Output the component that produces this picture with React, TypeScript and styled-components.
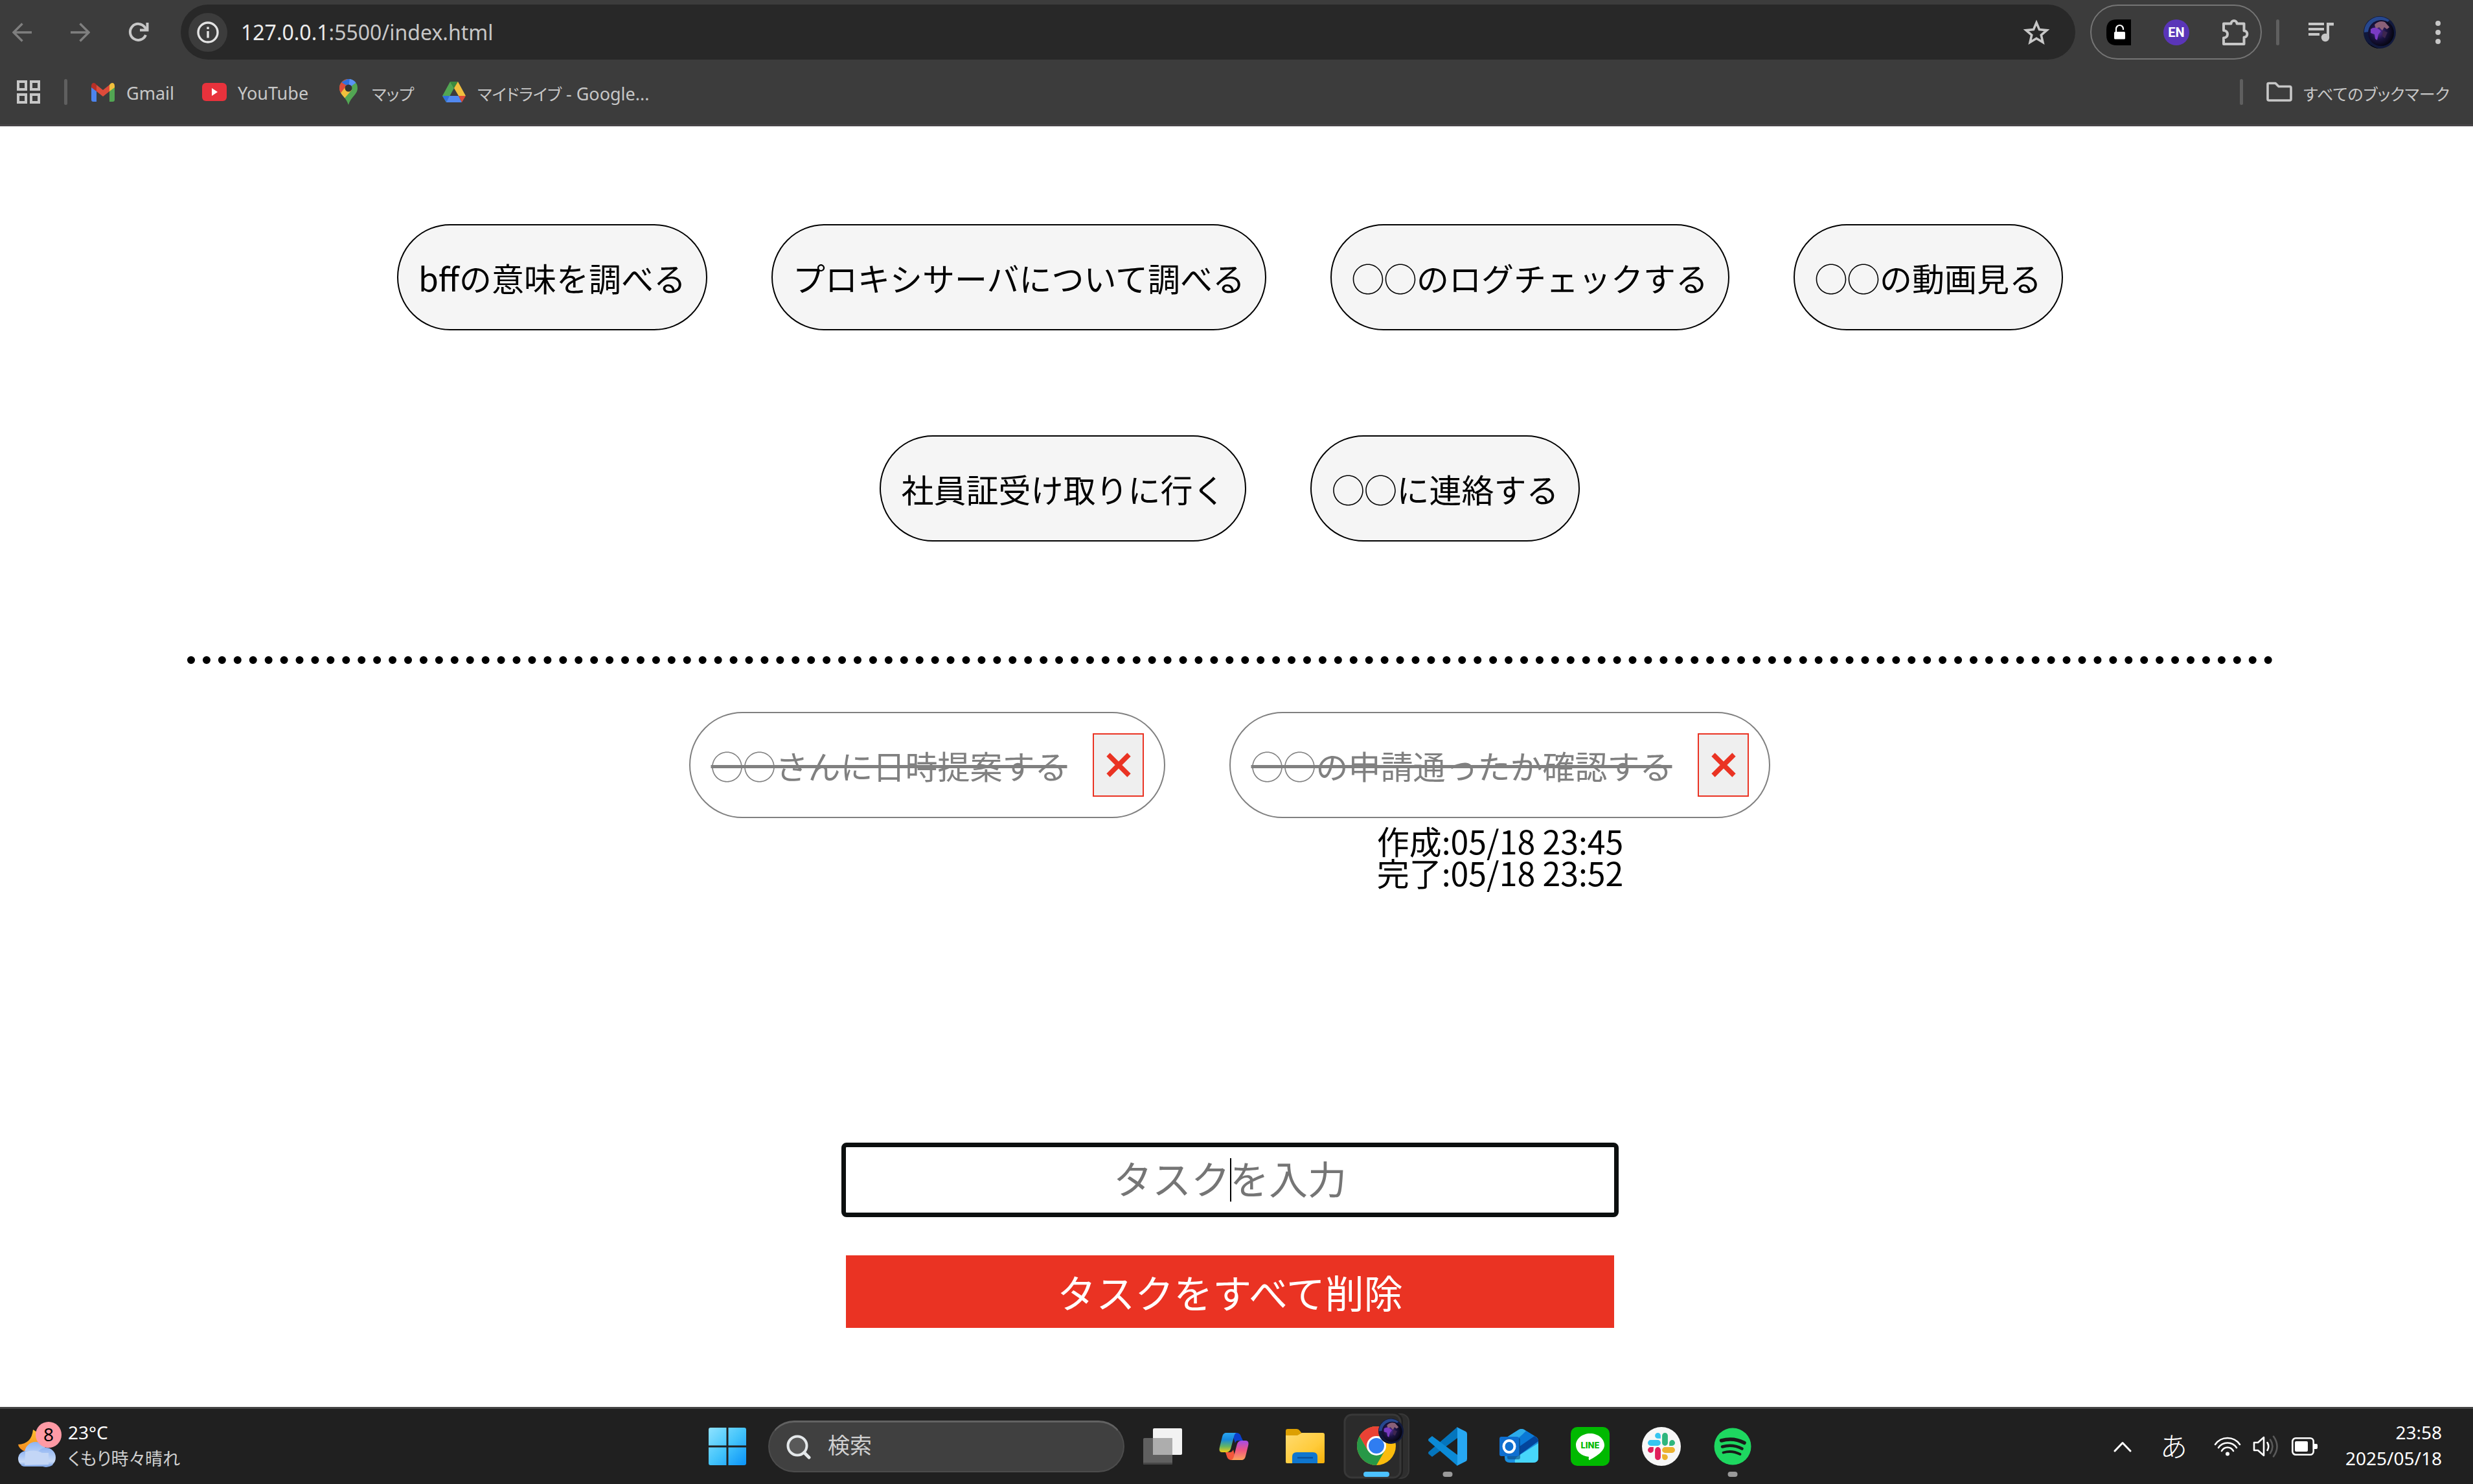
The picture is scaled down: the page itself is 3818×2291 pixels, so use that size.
import React, { useState } from "react";
import styled, { createGlobalStyle } from "styled-components";

const GlobalStyle = createGlobalStyle`
  *, *::before, *::after { box-sizing: border-box; }
  body {
    margin: 0;
    background: #fff;
    color: #000;
    font-family: "Noto Sans CJK JP", sans-serif;
  }
  #root { min-height: 100vh; }
  button, input { font: inherit; color: inherit; }
  svg { display: block; flex: none; }
  ul { list-style: none; margin: 0; padding: 0; }
`;

const uiFont = `"Noto Sans", "Noto Sans CJK JP", sans-serif`;

const Screen = styled.div`
  display: flex;
  flex-direction: column;
  min-height: 100vh;
`;

/* ---------- browser chrome ---------- */

const Browser = styled.header`
  background: #3c3c3c;
  border-bottom: 3px solid #484548;
  padding-top: 7px;
  font-family: ${uiFont};
  color: #c7c7c7;
`;

const Toolbar = styled.div`
  display: flex;
  align-items: center;
  height: 85px;
  padding: 0 34px 0 4px;
`;

const IconButton = styled.button<{ $size?: number }>`
  display: grid;
  place-items: center;
  flex: none;
  width: ${(p) => p.$size ?? 60}px;
  height: 60px;
  padding: 0;
  border: 0;
  background: none;
`;

const NavButtons = styled.nav`
  display: flex;
  gap: 30px;
  margin-right: 35px;
`;

const Omnibox = styled.div`
  flex: 1;
  display: flex;
  align-items: center;
  height: 85px;
  padding: 0 38px 0 12px;
  border-radius: 43px;
  background: #282828;
`;

const SiteInfo = styled(IconButton)`
  border-radius: 50%;
  background: #3c3c3c;
  color: #e3e3e3;
`;

const Address = styled.div`
  flex: 1;
  margin-left: 21px;
  font-size: 32px;
  line-height: 44px;
`;

const Host = styled.span`
  color: #ececec;
`;

const Extensions = styled.div`
  display: flex;
  align-items: center;
  justify-content: space-between;
  width: 265px;
  height: 85px;
  margin-left: 23px;
  padding: 0 18px 0 23px;
  border: 2px solid #757575;
  border-radius: 43px;
`;

const Language = styled.span`
  display: grid;
  place-items: center;
  width: 40px;
  height: 40px;
  border-radius: 50%;
  background: #5a35b8;
  color: #fff;
  font-family: Roboto, sans-serif;
  font-size: 20px;
  font-weight: 700;
`;

const Separator = styled.span`
  flex: none;
  width: 5px;
  height: 40px;
  border-radius: 3px;
  background: #5f5f5f;
`;

const ToolbarEnd = styled.div`
  display: flex;
  align-items: center;
  gap: 45px;
  margin-left: 22px;
`;

const Bookmarks = styled.nav`
  display: flex;
  align-items: center;
  justify-content: space-between;
  height: 100px;
  padding: 0 36px 0 24px;
`;

const BookmarkGroup = styled.div`
  display: flex;
  align-items: center;
  gap: 35px;
`;

const BookmarkList = styled.div`
  display: flex;
  align-items: center;
  gap: 42px;
`;

const Bookmark = styled.a`
  display: flex;
  align-items: center;
  gap: 16px;
  color: inherit;
  text-decoration: none;
  font-size: 27px;
  line-height: 40px;
`;

const BookmarkLabel = styled.span`
  padding-top: 4px;
`;

const Kana = styled.span<{ $size?: number }>`
  font-family: "Noto Sans CJK JP", sans-serif;
  font-size: ${(p) => p.$size ?? 25}px;
  font-feature-settings: "palt";
`;

/* ---------- task page ---------- */

const Page = styled.main`
  flex: 1;
  display: flex;
  flex-direction: column;
  align-items: center;
  padding: 151px 20px 122px 0;
`;

const TaskList = styled.ul`
  display: flex;
  flex-wrap: wrap;
  justify-content: center;
  gap: 162px 99px;
  width: 85%;
`;

const Task = styled.li<{ $done?: boolean }>`
  position: relative;
  display: flex;
  align-items: center;
  gap: 40px;
  height: 164px;
  padding: 0 31px;
  border: 2px solid ${(p) => (p.$done ? "#808080" : "#000")};
  border-radius: 82px;
  background: ${(p) => (p.$done ? "#fff" : "#f5f5f5")};
  color: ${(p) => (p.$done ? "#808080" : "#000")};
  font-size: 50px;
  line-height: 50px;
  white-space: nowrap;
`;

const DoneText = styled.s`
  text-decoration-thickness: 5px;
`;

const Divider = styled.hr`
  width: calc(85% - 8px);
  margin: 177px 0 74px;
  border: 0;
  border-top: 12px dotted #000;
`;

const Remove = styled.button`
  display: grid;
  place-items: center;
  width: 79px;
  height: 98px;
  padding: 0;
  border: 2px solid #ea3323;
  background: #efefef;
`;

const Stamp = styled.div`
  position: absolute;
  top: 100%;
  left: 50%;
  transform: translateX(-50%);
  margin-top: 12px;
  color: #000;
  line-height: 49px;
`;

const Form = styled.form`
  display: flex;
  flex-direction: column;
  align-items: center;
  gap: 59px;
  margin-top: auto;
`;

const Field = styled.div`
  position: relative;
`;

const TaskInput = styled.input`
  display: block;
  width: 1200px;
  height: 115px;
  padding: 0 0 8px;
  border: 7px solid #0c0f0f;
  border-radius: 8px;
  outline: none;
  background: #fff;
  font-size: 60px;
  text-align: center;
  caret-color: transparent;
  &::placeholder { color: #757575; opacity: 1; }
`;

const Caret = styled.span`
  position: absolute;
  top: 24px;
  left: 50%;
  width: 2px;
  height: 67px;
  background: #000;
`;

const ClearAll = styled.button`
  width: 1186px;
  height: 112px;
  padding: 0;
  border: 0;
  background: #ea3323;
  color: #fff;
  font-size: 60px;
  line-height: 60px;
`;

/* ---------- taskbar ---------- */

const Taskbar = styled.footer`
  display: grid;
  grid-template-columns: 1fr auto 1fr;
  align-items: center;
  height: 119px;
  padding-right: 20px;
  border-top: 3px solid #454545;
  background: #202020;
  color: #fff;
  font-family: ${uiFont};
  font-size: 28px;
  line-height: 40px;
`;

const Weather = styled.div`
  display: flex;
  align-items: center;
  gap: 8px;
  padding-left: 25px;
`;

const WeatherText = styled.div`
  display: flex;
  flex-direction: column;
  padding-bottom: 4px;
  color: #cfcfcf;
`;

const Temperature = styled.span`
  color: #fff;
`;

const Apps = styled.div`
  display: flex;
  align-items: center;
`;

const AppButton = styled.button`
  position: relative;
  display: grid;
  place-items: center;
  width: 110px;
  height: 116px;
  padding: 0;
  border: 0;
  background: none;
`;

const Indicator = styled.span<{ $active?: boolean }>`
  position: absolute;
  left: 50%;
  bottom: 11px;
  width: ${(p) => (p.$active ? 40 : 15)}px;
  height: 8px;
  border-radius: 4px;
  background: ${(p) => (p.$active ? "#4cc2ff" : "#9a9a9a")};
  transform: translateX(-50%);
`;

const Search = styled.label`
  display: flex;
  align-items: center;
  gap: 26px;
  width: 550px;
  height: 80px;
  margin: 0 4px 0 8px;
  padding: 0 26px;
  border: 2px solid #4c4c4c;
  border-top: 3px solid #626262;
  border-radius: 40px;
  background: #404040;
`;

const SearchInput = styled.input`
  flex: 1;
  min-width: 0;
  padding: 0 0 6px;
  border: 0;
  outline: none;
  background: none;
  font-size: 34px;
  &::placeholder { color: #d0d0d0; opacity: 1; }
`;

const Tray = styled.div`
  display: flex;
  align-items: center;
  justify-content: flex-end;
  padding-right: 28px;
`;

const Ime = styled.span`
  margin: 0 41px 0 44px;
  padding-bottom: 4px;
  font-family: "Noto Sans CJK JP", sans-serif;
  font-size: 42px;
  font-weight: 300;
`;

const TrayIcons = styled.div`
  display: flex;
  align-items: center;
  gap: 18px;
  margin-right: 43px;
`;

const Clock = styled.time`
  display: flex;
  flex-direction: column;
  padding-bottom: 4px;
  text-align: right;
`;

/* ---------- icons ---------- */

const Arrow = ({ flip }: { flip?: boolean }) => (
  <svg width="30" height="30" viewBox="0 0 30 30" fill="none" stroke="#7f7f7f" strokeWidth="3.4">
    <path d={flip ? "M0 15H27M14.500 1.500L28 15L14.500 28.500" : "M30 15H3M15.500 1.500L2 15L15.500 28.500"} />
  </svg>
);

const Reload = () => (
  <svg width="32" height="32" viewBox="0 0 32 32" fill="none" stroke="#c7c7c7" strokeWidth="4">
    <path d="M27 20A12.500 12.500 0 1 1 25.500 8L29 12" />
    <path d="M29.500 1V12.500H18" />
  </svg>
);

const Info = () => (
  <svg width="34" height="34" viewBox="0 0 34 34" fill="none" stroke="currentColor" strokeWidth="3.400">
    <circle cx="17" cy="17" r="15" />
    <path d="M17 15V25.500M17 8.500V12" />
  </svg>
);

const Star = () => (
  <svg width="42" height="40" viewBox="0 0 42 40" fill="none" stroke="#c7c7c7" strokeWidth="3.600">
    <path d="M21 5L25.500 15.600L37 16.600L28.300 24.100L30.900 35.300L21 29.300L11.100 35.300L13.700 24.100L5 16.600L16.500 15.600Z" />
  </svg>
);

const Lock = () => (
  <svg width="38" height="40" viewBox="0 0 38 40">
    <path d="M16 0H38V40H16Q0 40 0 24V16Q0 0 16 0Z" fill="#000" />
    <rect x="12" y="19" width="17" height="11.500" rx="1.500" fill="#fff" />
    <path d="M15 20V14.500a5.500 5.500 0 0 1 11 0V16" fill="none" stroke="#fff" strokeWidth="2.200" />
  </svg>
);

const Puzzle = () => (
  <svg width="42" height="42" viewBox="0 0 42 42" fill="none" stroke="#c7c7c7" strokeWidth="4" strokeLinejoin="round">
    <path d="M3 7.500H14.500C14.500 1.500 23.500 1.500 23.500 7.500H34.500V18.500C41 18.500 41 28.500 34.500 28.500V39H3V29.500C11 29 11 18.500 3 18Z" />
  </svg>
);

const Music = () => (
  <svg width="40" height="32" viewBox="0 0 40 32" fill="#c7c7c7">
    <path d="M0 1h24v4H0zM0 9h24v4H0zM0 17h17v4H0z" />
    <path d="M28 1h11v4.500h-7V24h-4z" />
    <circle cx="26" cy="24" r="6.200" />
  </svg>
);

const Globe = ({ size }: { size: number }) => (
  <svg width={size} height={size} viewBox="0 0 50 50">
    <defs>
      <radialGradient id={`g${size}`} cx="40%" cy="45%" r="60%">
        <stop offset="0" stopColor="#58329a" />
        <stop offset=".5" stopColor="#1b1442" />
        <stop offset="1" stopColor="#05050f" />
      </radialGradient>
    </defs>
    <circle cx="25" cy="25" r="25" fill="#10183c" />
    <path d="M1 25A24 24 0 0 1 40 6L34 12A16 16 0 0 0 8 24Z" fill="#27488f" />
    <circle cx="27" cy="26" r="20" fill={`url(#g${size})`} />
    <path d="M17 13Q24 6 33 9L40 17L36 20L32 17L29 22L24 17L19 20Z" fill="#8a6078" />
    <path d="M11 20Q16 16 22 19L27 23L23 28L21 37L18 35L17 28L11 26Z" fill="#7a3bc4" />
    <path d="M30 22L37 25L33 34L29 31Z" fill="#3d264f" />
    <path d="M2 34Q8 46 24 50Q10 49 2 34Z" fill="#000" />
  </svg>
);

const Dots = () => (
  <svg width="8" height="36" viewBox="0 0 8 36" fill="#c7c7c7">
    <circle cx="4" cy="4" r="4" />
    <circle cx="4" cy="18" r="4" />
    <circle cx="4" cy="32" r="4" />
  </svg>
);

const Grid = () => (
  <svg width="40" height="36" viewBox="0 0 40 36" fill="none" stroke="#c7c7c7" strokeWidth="4">
    <path d="M4 2h12v12H4zM24 2h12v12H24zM4 22h12v12H4zM24 22h12v12H24z" />
  </svg>
);

const Gmail = () => (
  <svg width="40" height="40" viewBox="0 0 40 40">
    <path d="M2 12L10 17V35H5Q2 35 2 32Z" fill="#4c84ee" />
    <path d="M38 12L30 17V35H35Q38 35 38 32Z" fill="#52a653" />
    <path d="M10 9L20 17L30 9V19L20 27L10 19Z" fill="#dd4b3a" />
    <path d="M2 11Q2 6 6 6Q8 6 10 9V19L2 13Z" fill="#b72f27" />
    <path d="M38 11Q38 6 34 6Q32 6 30 9V19L38 13Z" fill="#f1bf3d" />
  </svg>
);

const YouTube = () => (
  <svg width="40" height="40" viewBox="0 0 40 40">
    <rect x="1" y="6" width="38" height="28" rx="6" fill="#e8323c" />
    <path d="M16 14L25 20L16 26Z" fill="#fff" />
  </svg>
);

const MapPin = () => (
  <svg width="40" height="40" viewBox="0 0 40 40">
    <defs>
      <clipPath id="pin">
        <path d="M20 0A14 14 0 0 1 34 14C34 24 24 27 20 40C16 27 6 24 6 14A14 14 0 0 1 20 0Z" />
      </clipPath>
    </defs>
    <g clipPath="url(#pin)">
      <path d="M0 0H40V40H0Z" fill="#52a653" />
      <path d="M4 20L22 0H0Z" fill="#dd4b3a" />
      <path d="M9 5L20 14L33 4L22-2Z" fill="#3070de" />
      <path d="M20 14L34 4V-2H22Z" fill="#5a92f4" />
      <path d="M6 22L17 9L25 17L11 33Z" fill="#f1bf3d" />
      <path d="M3 20L9 5L17 10L7 23Z" fill="#dd4b3a" />
    </g>
    <circle cx="20" cy="14" r="5.500" fill="#333" />
  </svg>
);

const Drive = () => (
  <svg width="40" height="40" viewBox="0 0 40 40">
    <path d="M14 4L20 14L8 36L2 26Z" fill="#52a653" />
    <path d="M14 4H26L20 14Z" fill="#3a8a3f" />
    <path d="M26 4L38 26H27L20 14Z" fill="#f1bf3d" />
    <path d="M2 26H13L8 36Z" fill="#3070de" />
    <path d="M13 26H27L32 36H8Z" fill="#5289f0" />
    <path d="M27 26H38L32 36Z" fill="#dd4b3a" />
  </svg>
);

const Folder = () => (
  <svg width="42" height="32" viewBox="0 0 42 32" fill="none" stroke="#c7c7c7" strokeWidth="3.600" strokeLinejoin="round">
    <path d="M3 4Q3 2.500 5 2.500H15L20 7.500H37Q39 7.500 39 9.500V27Q39 29 37 29H5Q3 29 3 27Z" />
  </svg>
);

const Cross = () => (
  <svg width="38" height="38" viewBox="0 0 38 38" stroke="#ea3323" strokeWidth="7.500">
    <path d="M3 3L35 35M35 3L3 35" />
  </svg>
);

const WeatherIcon = () => (
  <svg width="72" height="76" viewBox="0 0 72 76">
    <defs>
      <linearGradient id="moon" x1="0" y1="0" x2="0" y2="1">
        <stop offset="0" stopColor="#fdbf2d" />
        <stop offset="1" stopColor="#f58a1f" />
      </linearGradient>
      <linearGradient id="cloud" x1="0" y1="0" x2="0" y2="1">
        <stop offset="0" stopColor="#8fb4f3" />
        <stop offset=".7" stopColor="#c9dbf7" />
        <stop offset="1" stopColor="#7ba2e6" />
      </linearGradient>
    </defs>
    <g transform="translate(0 -4)">
      <path d="M26 16Q44 26 38 46L14 50Q4 46 3 39Q24 38 26 16Z" fill="url(#moon)" />
      <circle cx="30" cy="52" r="17" fill="url(#cloud)" />
      <circle cx="46" cy="59" r="15" fill="url(#cloud)" />
      <circle cx="15" cy="61" r="12" fill="url(#cloud)" />
      <path d="M14 50Q30 46 40 52H50V73H13Z" fill="#c3d6f6" />
      <path d="M7 71Q10 73 14 73H48Q54 73 57 70Z" fill="#8aaeea" />
    </g>
    <circle cx="50" cy="20" r="20" fill="#ff9aa5" />
    <text x="50" y="30" textAnchor="middle" fontFamily="Noto Sans, sans-serif" fontSize="28" fill="#000">8</text>
  </svg>
);

const Windows = () => (
  <svg width="58" height="58" viewBox="0 0 58 58">
    <defs>
      <linearGradient id="win" gradientUnits="userSpaceOnUse" x1="0" y1="0" x2="58" y2="58">
        <stop offset="0" stopColor="#8fe3ff" />
        <stop offset=".5" stopColor="#45c5fb" />
        <stop offset="1" stopColor="#0a93f8" />
      </linearGradient>
    </defs>
    <path fill="url(#win)" d="M3 0H27.500V27.500H0V3Q0 0 3 0ZM30.500 0H55Q58 0 58 3V27.500H30.500ZM0 30.500H27.500V58H3Q0 58 0 55ZM30.500 30.500H58V55Q58 58 55 58H30.500Z" />
  </svg>
);

const Magnifier = () => (
  <svg width="38" height="38" viewBox="0 0 38 38" fill="none" stroke="#e4e8ea" strokeWidth="4">
    <circle cx="17" cy="17" r="14.500" fill="#595959" />
    <path d="M27.500 27.500L35 35" strokeWidth="5" strokeLinecap="round" />
  </svg>
);

const TaskView = () => (
  <svg width="60" height="56" viewBox="0 0 60 56">
    <rect x="15" y="0" width="45" height="41" rx="2" fill="#f2f2f2" />
    <rect x="0" y="15" width="45" height="41" rx="2" fill="#606060" />
    <rect x="15" y="15" width="30" height="26" fill="#adadad" />
    <rect x="0" y="53" width="45" height="3" rx="1" fill="#474747" />
  </svg>
);

const Copilot = () => (
  <svg width="46" height="42" viewBox="0 0 46 42">
    <defs>
      <linearGradient id="cpa" x1="0" y1="0" x2="0" y2="1">
        <stop offset="0" stopColor="#2aa5f0" />
        <stop offset=".35" stopColor="#1689dd" />
        <stop offset=".7" stopColor="#64b562" />
        <stop offset="1" stopColor="#f5cc14" />
      </linearGradient>
      <linearGradient id="cpb" x1="0" y1="0" x2="0" y2="1">
        <stop offset="0" stopColor="#a44be8" />
        <stop offset=".5" stopColor="#f0567f" />
        <stop offset="1" stopColor="#fba25b" />
      </linearGradient>
    </defs>
    <path d="M20 0H28Q33 1 34 6L37 12H29Q26 12 25 16Z" fill="#0b3fce" />
    <path d="M26 42H18Q13 41 12 36L10 30H17Q20 30 22 26Z" fill="#f4573b" />
    <path d="M10 0H27Q24 1 23 6L18 25Q16 30 11 30H5Q-1 30 1 22L5 6Q6 1 10 0Z" fill="url(#cpa)" />
    <path d="M36 42H19Q22 41 23 36L28 17Q30 12 35 12H41Q47 12 45 20L41 36Q40 41 36 42Z" fill="url(#cpb)" />
  </svg>
);

const Explorer = () => (
  <svg width="60" height="54" viewBox="0 0 60 54">
    <defs>
      <linearGradient id="fold" x1="0" y1="0" x2="1" y2="1">
        <stop offset="0" stopColor="#ffdb70" />
        <stop offset=".6" stopColor="#ffcb3a" />
        <stop offset="1" stopColor="#f5af07" />
      </linearGradient>
    </defs>
    <path d="M0 3Q0 0 3 0H17Q20 0 22 3L25 7L20 14H0Z" fill="#dda001" />
    <path d="M0 10H18L25 6H57Q60 6 60 9V51Q60 53 58 53H2Q0 53 0 51Z" fill="url(#fold)" />
    <path d="M10 53V43Q10 36 17 36H42Q49 36 49 43V53Z" fill="#0f76cf" />
    <path d="M18 44.500H42" stroke="#0a4a91" strokeWidth="2" />
  </svg>
);

const Chrome = () => (
  <svg width="110" height="116" viewBox="0 0 110 116">
    <rect x="56" y="8" width="49" height="99" rx="12" fill="#2e2e2e" stroke="#383838" strokeWidth="2" />
    <rect x="3" y="6" width="93" height="103" rx="13" fill="#202020" />
    <rect x="6" y="9" width="86" height="97" rx="11" fill="#2b2b2b" stroke="#383838" strokeWidth="3" />
    <g transform="translate(25 27)">
      <circle cx="30" cy="30" r="30" fill="#fbbc0d" />
      <path d="M4 15A30 30 0 0 0 30 60L43 37.500L17 37.500Z" fill="#279847" />
      <path d="M4 15L17 37.500L30 30V15H56A30 30 0 0 0 4 15Z" fill="#e94235" />
      <circle cx="30" cy="30" r="15" fill="#fff" />
      <circle cx="30" cy="30" r="12" fill="#2f7df1" />
    </g>
    <g transform="translate(58 15)">
      <Globe size={39} />
    </g>
  </svg>
);

const VSCode = () => (
  <svg width="60" height="60" viewBox="0 0 60 60">
    <path d="M45 0L45 17L6 46L1 42Q-1 40 1 38Z" fill="#0475bd" />
    <path d="M6 14L45 43V60L1 22Q-1 20 1 18Z" fill="#0b8ad6" />
    <path d="M44 0L58 7Q60 8 60 11V49Q60 52 58 53L44 60Q45 59 45 57V3Q45 1 44 0Z" fill="#27a7f2" />
  </svg>
);

const Outlook = () => (
  <svg width="60" height="54" viewBox="0 0 60 54">
    <path d="M8 15L30 1Q34 -1 38 1L56 12Q60 14 60 19V44Q60 52 52 52H16Q8 52 8 44Z" fill="#1a8fe0" />
    <path d="M8 15L30 1Q34 -1 38 1L42 4L20 20H8Z" fill="#2cabea" />
    <path d="M41 3L54 11L30 30V14Z" fill="#0a78d6" />
    <path d="M54 11Q60 14 60 19L31 40V27Z" fill="#03459c" />
    <path d="M60 22V44Q60 52 52 52H24Q22 46 30 41Z" fill="#47d6fa" />
    <rect x="12" y="14" width="20" height="33" rx="3" fill="#0a3c72" opacity=".55" />
    <rect x="0" y="12" width="30" height="30" rx="3" fill="#0f6fd0" />
    <ellipse cx="15" cy="27" rx="8.500" ry="9" fill="none" stroke="#fff" strokeWidth="4" />
  </svg>
);

const Line = () => (
  <svg width="60" height="60" viewBox="0 0 60 60">
    <rect width="60" height="60" rx="10" fill="#00b900" />
    <path d="M30 10C42 10 52 18 52 28C52 38 38 46 29 51Q27 51 28 46C16 45 8 37 8 28C8 18 18 10 30 10Z" fill="#fff" />
    <text x="30" y="32.500" textAnchor="middle" fontFamily="Inter, sans-serif" fontWeight="800" fontSize="13" fill="#00b900">LINE</text>
  </svg>
);

const Slack = () => (
  <svg width="60" height="60" viewBox="0 0 60 60">
    <circle cx="30" cy="30" r="30" fill="#f7f7f7" />
    <g transform="translate(9 9)">
      <path d="M15.500 0A4.400 4.400 0 0 0 15.500 8.800H19.900V4.400A4.400 4.400 0 0 0 15.500 0ZM4.400 11.100H15.500A4.400 4.400 0 0 1 15.500 19.900H4.400A4.400 4.400 0 0 1 4.400 11.100Z" fill="#36c5f0" />
      <path d="M42 15.500A4.400 4.400 0 0 0 33.200 15.500V19.900H37.600A4.400 4.400 0 0 0 42 15.500ZM30.900 15.500V4.400A4.400 4.400 0 0 0 22.100 4.400V15.500A4.400 4.400 0 0 0 30.900 15.500Z" fill="#2eb67d" />
      <path d="M26.500 42A4.400 4.400 0 0 0 26.500 33.200H22.100V37.600A4.400 4.400 0 0 0 26.500 42ZM26.500 30.900H37.600A4.400 4.400 0 0 0 37.600 22.100H26.500A4.400 4.400 0 0 0 26.500 30.900Z" fill="#ecb22e" />
      <path d="M0 26.500A4.400 4.400 0 0 0 8.800 26.500V22.100H4.400A4.400 4.400 0 0 0 0 26.500ZM11.100 26.500V37.600A4.400 4.400 0 0 0 19.900 37.600V26.500A4.400 4.400 0 0 0 11.100 26.500Z" fill="#e01e5a" />
    </g>
  </svg>
);

const Spotify = () => (
  <svg width="58" height="58" viewBox="0 0 58 58" fill="none" stroke="#191919" strokeLinecap="round">
    <circle cx="29" cy="29" r="28.500" fill="#1ed760" stroke="none" />
    <path d="M11.500 20Q30 14.500 47 23.500" strokeWidth="5.500" />
    <path d="M13 29.500Q29 25 43.500 32.500" strokeWidth="4.600" />
    <path d="M14.500 38.500Q28 34.500 40.500 41" strokeWidth="3.800" />
  </svg>
);

const Chevron = () => (
  <svg width="28" height="17" viewBox="0 0 28 17" fill="none" stroke="#fff" strokeWidth="3" strokeLinecap="round" strokeLinejoin="round">
    <path d="M2 15L14 2.500L26 15" />
  </svg>
);

const Wifi = () => (
  <svg width="42" height="32" viewBox="0 0 42 32" fill="none" stroke="#fff" strokeWidth="2.600" strokeLinecap="round">
    <path d="M2 13Q9 3 21 3T40 13M7 18Q12 10.500 21 10.500T35 18M12 23Q15 17.500 21 17.500T30 23" />
    <circle cx="21" cy="27.500" r="3" fill="#fff" stroke="none" />
  </svg>
);

const Speaker = () => (
  <svg width="42" height="36" viewBox="0 0 42 36" fill="none" stroke="#fff" strokeWidth="2.600" strokeLinejoin="round" strokeLinecap="round">
    <path d="M2 12H8L17 4V32L8 24H2Z" />
    <path d="M22.500 12Q26 18 22.500 24" />
    <path d="M27 7.500Q34 18 27 28.500M32 2.500Q43 18 32 33.500" stroke="#5a5a5a" />
  </svg>
);

const Battery = () => (
  <svg width="40" height="28" viewBox="0 0 40 28">
    <rect x="1.300" y="1.300" width="32.400" height="25.400" rx="5" fill="none" stroke="#fff" strokeWidth="2.600" />
    <rect x="5" y="6" width="20" height="16" rx="2" fill="#fff" />
    <path d="M35 10H38Q40 10 40 12V16Q40 18 38 18H35Z" fill="#fff" />
  </svg>
);

/* ---------- data ---------- */

const openTasks = [
  "bffの意味を調べる",
  "プロキシサーバについて調べる",
  "◯◯のログチェックする",
  "◯◯の動画見る",
  "社員証受け取りに行く",
  "◯◯に連絡する",
];

const doneTasks = [
  { text: "◯◯さんに日時提案する" },
  { text: "◯◯の申請通ったか確認する", created: "05/18 23:45", finished: "05/18 23:52" },
];

const apps = [
  { name: "タスク ビュー", icon: <TaskView /> },
  { name: "Copilot", icon: <Copilot /> },
  { name: "エクスプローラー", icon: <Explorer /> },
  { name: "Google Chrome", icon: <Chrome />, state: "active" },
  { name: "Visual Studio Code", icon: <VSCode />, state: "running" },
  { name: "Outlook", icon: <Outlook /> },
  { name: "LINE", icon: <Line /> },
  { name: "Slack", icon: <Slack /> },
  { name: "Spotify", icon: <Spotify />, state: "running" },
];

export default function App() {
  const [value, setValue] = useState("");

  return (
    <Screen>
      <GlobalStyle />
      <Browser>
        <Toolbar>
          <NavButtons>
            <IconButton aria-label="戻る"><Arrow /></IconButton>
            <IconButton aria-label="進む"><Arrow flip /></IconButton>
            <IconButton aria-label="再読み込み"><Reload /></IconButton>
          </NavButtons>
          <Omnibox>
            <SiteInfo aria-label="サイト情報"><Info /></SiteInfo>
            <Address><Host>127.0.0.1</Host>:5500/index.html</Address>
            <IconButton $size={44} aria-label="ブックマークに追加"><Star /></IconButton>
          </Omnibox>
          <Extensions>
            <IconButton $size={38} aria-label="ロック"><Lock /></IconButton>
            <Language>EN</Language>
            <IconButton $size={42} aria-label="拡張機能"><Puzzle /></IconButton>
          </Extensions>
          <ToolbarEnd>
            <Separator />
            <IconButton $size={40} aria-label="メディア"><Music /></IconButton>
            <IconButton $size={50} aria-label="プロフィール"><Globe size={50} /></IconButton>
            <IconButton $size={40} aria-label="メニュー"><Dots /></IconButton>
          </ToolbarEnd>
        </Toolbar>
        <Bookmarks>
          <BookmarkGroup>
            <IconButton $size={40} aria-label="アプリ"><Grid /></IconButton>
            <Separator />
            <BookmarkList>
              <Bookmark href="#gmail"><Gmail /><BookmarkLabel>Gmail</BookmarkLabel></Bookmark>
              <Bookmark href="#youtube"><YouTube /><BookmarkLabel>YouTube</BookmarkLabel></Bookmark>
              <Bookmark href="#maps"><MapPin /><BookmarkLabel><Kana>マップ</Kana></BookmarkLabel></Bookmark>
              <Bookmark href="#drive"><Drive /><BookmarkLabel><Kana>マイドライブ</Kana> - Google...</BookmarkLabel></Bookmark>
            </BookmarkList>
          </BookmarkGroup>
          <BookmarkGroup>
            <Separator />
            <Bookmark href="#all"><Folder /><BookmarkLabel><Kana>すべてのブックマーク</Kana></BookmarkLabel></Bookmark>
          </BookmarkGroup>
        </Bookmarks>
      </Browser>

      <Page>
        <TaskList>
          {openTasks.map((text) => (
            <Task key={text}>{text}</Task>
          ))}
        </TaskList>
        <Divider />
        <TaskList>
          {doneTasks.map((task) => (
            <Task key={task.text} $done>
              <DoneText>{task.text}</DoneText>
              <Remove aria-label="削除"><Cross /></Remove>
              {task.created && (
                <Stamp>
                  作成:{task.created}
                  <br />
                  完了:{task.finished}
                </Stamp>
              )}
            </Task>
          ))}
        </TaskList>
        <Form onSubmit={(e) => e.preventDefault()}>
          <Field>
            <TaskInput
              aria-label="タスクを入力"
              placeholder="タスクを入力"
              value={value}
              onChange={(e) => setValue(e.target.value)}
            />
            <Caret />
          </Field>
          <ClearAll type="button">タスクをすべて削除</ClearAll>
        </Form>
      </Page>

      <Taskbar>
        <Weather>
          <WeatherIcon />
          <WeatherText>
            <Temperature>23°C</Temperature>
            <Kana $size={27}>くもり時々晴れ</Kana>
          </WeatherText>
        </Weather>
        <Apps>
          <AppButton aria-label="スタート"><Windows /></AppButton>
          <Search>
            <Magnifier />
            <SearchInput aria-label="検索" placeholder="検索" />
          </Search>
          {apps.map((app) => (
            <AppButton key={app.name} aria-label={app.name}>
              {app.icon}
              {app.state && <Indicator $active={app.state === "active"} />}
            </AppButton>
          ))}
        </Apps>
        <Tray>
          <Chevron />
          <Ime>あ</Ime>
          <TrayIcons>
            <Wifi />
            <Speaker />
            <Battery />
          </TrayIcons>
          <Clock>
            <span>23:58</span>
            <span>2025/05/18</span>
          </Clock>
        </Tray>
      </Taskbar>
    </Screen>
  );
}
